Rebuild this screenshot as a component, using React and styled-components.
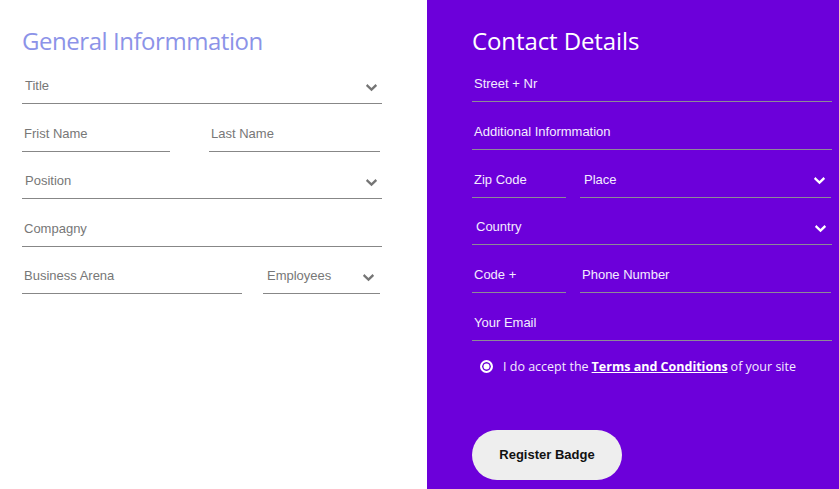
import React from 'react';
import styled, { createGlobalStyle } from 'styled-components';

const GlobalStyle = createGlobalStyle`
  html, body {
    margin: 0;
    padding: 0;
    height: 100%;
  }
  body {
    font-family: "Liberation Sans", Arial, sans-serif;
  }
  * {
    box-sizing: border-box;
  }
`;

const Page = styled.div`
  display: flex;
  width: 100%;
  height: 100vh;
  overflow: hidden;
`;

const Panel = styled.section`
  width: ${p => (p.$dark ? '412px' : '427px')};
  flex-shrink: 0;
  background: ${p => (p.$dark ? '#6c00da' : '#ffffff')};
  padding: 25px 0 0 ${p => (p.$dark ? '45px' : '22px')};
`;

const Heading = styled.h2`
  margin: 0 0 ${p => (p.$dark ? 7 : 9)}px;
  font-family: "Open Sans", sans-serif;
  font-weight: 400;
  font-size: 24px;
  line-height: 32px;
  letter-spacing: ${p => (p.$dark ? '-0.1px' : '-0.45px')};
  color: ${p => (p.$dark ? '#ffffff' : '#8c93e8')};
`;

const Form = styled.div`
  display: flex;
  flex-direction: column;
  gap: ${p => (p.$dark ? 9.8 : 9.6)}px;
  width: 360px;
`;

const Row = styled.div`
  display: flex;
  gap: ${p => p.$gap || 14}px;
`;

const Field = styled.div`
  position: relative;
  width: ${p => (p.$w ? `${p.$w}px` : '100%')};
  height: 38px;
  display: flex;
  align-items: center;
  padding: 2px ${p => p.$pad ?? 2}px 0;
  border-bottom: 1px solid ${p => (p.$dark ? '#8d8a96' : '#878787')};
  font-size: 13px;
  color: ${p => (p.$dark ? '#f4ecff' : '#777777')};
`;

const Label = styled.span`
  flex: 1;
  white-space: nowrap;
`;

const Chevron = styled.svg`
  width: 11px;
  height: 8px;
  margin-right: 2px;
  margin-top: 4px;
`;

const ChevronIcon = ({ color }) => (
  <Chevron viewBox="0 0 11 8">
    <polyline
      points="1.5,1.8 5.5,5.6 9.5,1.8"
      fill="none"
      stroke={color}
      strokeWidth="2.4"
      strokeLinecap="square"
    />
  </Chevron>
);

const Input = ({ label, dark, w, pad }) => (
  <Field $dark={dark} $w={w} $pad={pad}>
    <Label>{label}</Label>
  </Field>
);

const Select = ({ label, dark, w, pad }) => (
  <Field $dark={dark} $w={w} $pad={pad}>
    <Label>{label}</Label>
    <ChevronIcon color={dark ? '#ffffff' : '#757575'} />
  </Field>
);

const Terms = styled.label`
  display: flex;
  align-items: center;
  gap: 10px;
  margin: 17px 0 0 8px;
  font-family: "Open Sans", sans-serif;
  font-size: 12.5px;
  color: #f4ecff;

  a {
    color: #ffffff;
    font-weight: 700;
    text-decoration: underline;
    margin: 0 3px;
  }
`;

const Radio = styled.span`
  width: 13px;
  height: 13px;
  border-radius: 50%;
  border: 2px solid #ffffff;
  background: #ffffff;
  box-shadow: inset 0 0 0 1.5px #6c00da;
  flex-shrink: 0;
`;

const Button = styled.button`
  margin-top: 55px;
  width: 150px;
  height: 50px;
  border: none;
  border-radius: 25px;
  background: #eeeeee;
  font-family: "Liberation Sans", Arial, sans-serif;
  font-weight: 700;
  font-size: 13px;
  color: #111111;
  cursor: pointer;
`;

export default function App() {
  return (
    <>
      <GlobalStyle />
      <Page>
        <Panel>
          <Heading>General Informmation</Heading>
          <Form>
            <Select label="Title" pad={3} />
            <Row $gap={39}>
              <Input label="Frist Name" w={148} />
              <Input label="Last Name" w={171} />
            </Row>
            <Select label="Position" pad={3} />
            <Input label="Compagny" />
            <Row $gap={21}>
              <Input label="Business Arena" w={220} />
              <Select label="Employees" w={117} pad={4} />
            </Row>
          </Form>
        </Panel>
        <Panel $dark>
          <Heading $dark>Contact Details</Heading>
          <Form $dark>
            <Input dark label="Street + Nr" />
            <Input dark label="Additional Informmation" />
            <Row>
              <Input dark label="Zip Code" w={94} />
              <Select dark label="Place" w={251} pad={4} />
            </Row>
            <Select dark label="Country" pad={4} />
            <Row>
              <Input dark label="Code +" w={94} />
              <Input dark label="Phone Number" w={251} />
            </Row>
            <Input dark label="Your Email" />
          </Form>
          <Terms>
            <Radio />
            <span>
              I do accept the<a href="#terms">Terms and Conditions</a>of your site
            </span>
          </Terms>
          <Button>Register Badge</Button>
        </Panel>
      </Page>
    </>
  );
}
